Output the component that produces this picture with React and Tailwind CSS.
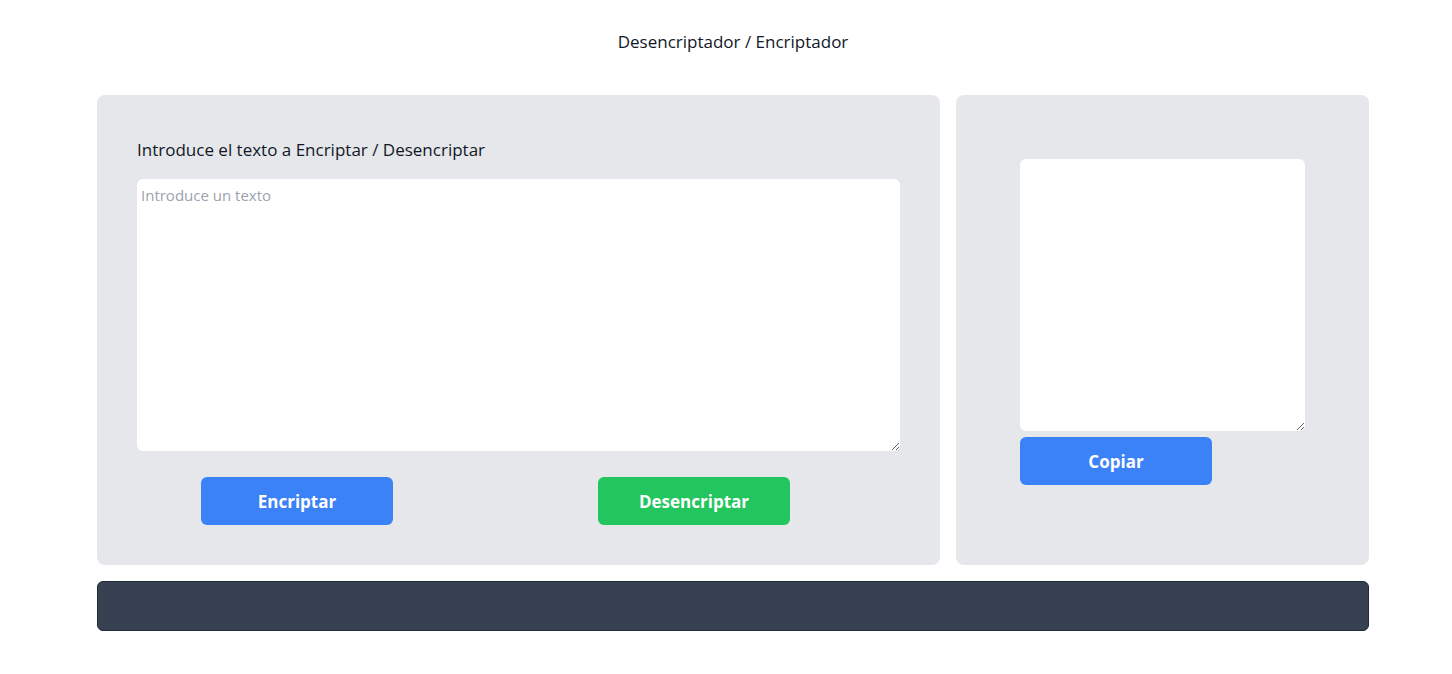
export default function App() {
  return (
    <div className="min-h-screen bg-white text-[#111827]" style={{ fontFamily: '"Open Sans", "Noto Sans", sans-serif' }}>
      <div className="ml-[97px] w-[1272px]">
        <h1 className="pt-[30px] text-center text-[17px] leading-[24px] font-normal">Desencriptador / Encriptador</h1>
        <div className="mt-[41px] flex gap-4">
          <div className="flex h-[470px] w-[843px] flex-col rounded-lg bg-[#e5e7eb] px-10 pt-[41px]">
            <label className="text-[17px] leading-[28px]">Introduce el texto a Encriptar / Desencriptar</label>
            <textarea
              className="mt-[15px] h-[272px] w-full rounded-md border-0 bg-white px-1 py-[4px] text-[15px] leading-[24px] outline-none placeholder:text-[#9ca3af]"
              placeholder="Introduce un texto"
            />
            <div className="mt-[26px] flex pl-16">
              <button className="h-12 w-48 rounded-md bg-[#3b82f6] pt-[2px] text-[17px] font-bold text-white">Encriptar</button>
              <button className="ml-[205px] h-12 w-48 rounded-md bg-[#22c55e] pt-[2px] text-[17px] font-bold text-white">Desencriptar</button>
            </div>
          </div>
          <div className="flex h-[470px] w-[413px] flex-col rounded-lg bg-[#e5e7eb] px-16 pt-16">
            <textarea className="h-[272px] w-full rounded-md border-0 bg-white p-1 outline-none" />
            <div className="mt-[6px]">
              <button className="h-12 w-48 rounded-md bg-[#3b82f6] pt-[2px] text-[17px] font-bold text-white">Copiar</button>
            </div>
          </div>
        </div>
        <div className="mt-4 h-[50px] rounded-md border border-[#1f2937] bg-[#374151]" />
      </div>
    </div>
  );
}
